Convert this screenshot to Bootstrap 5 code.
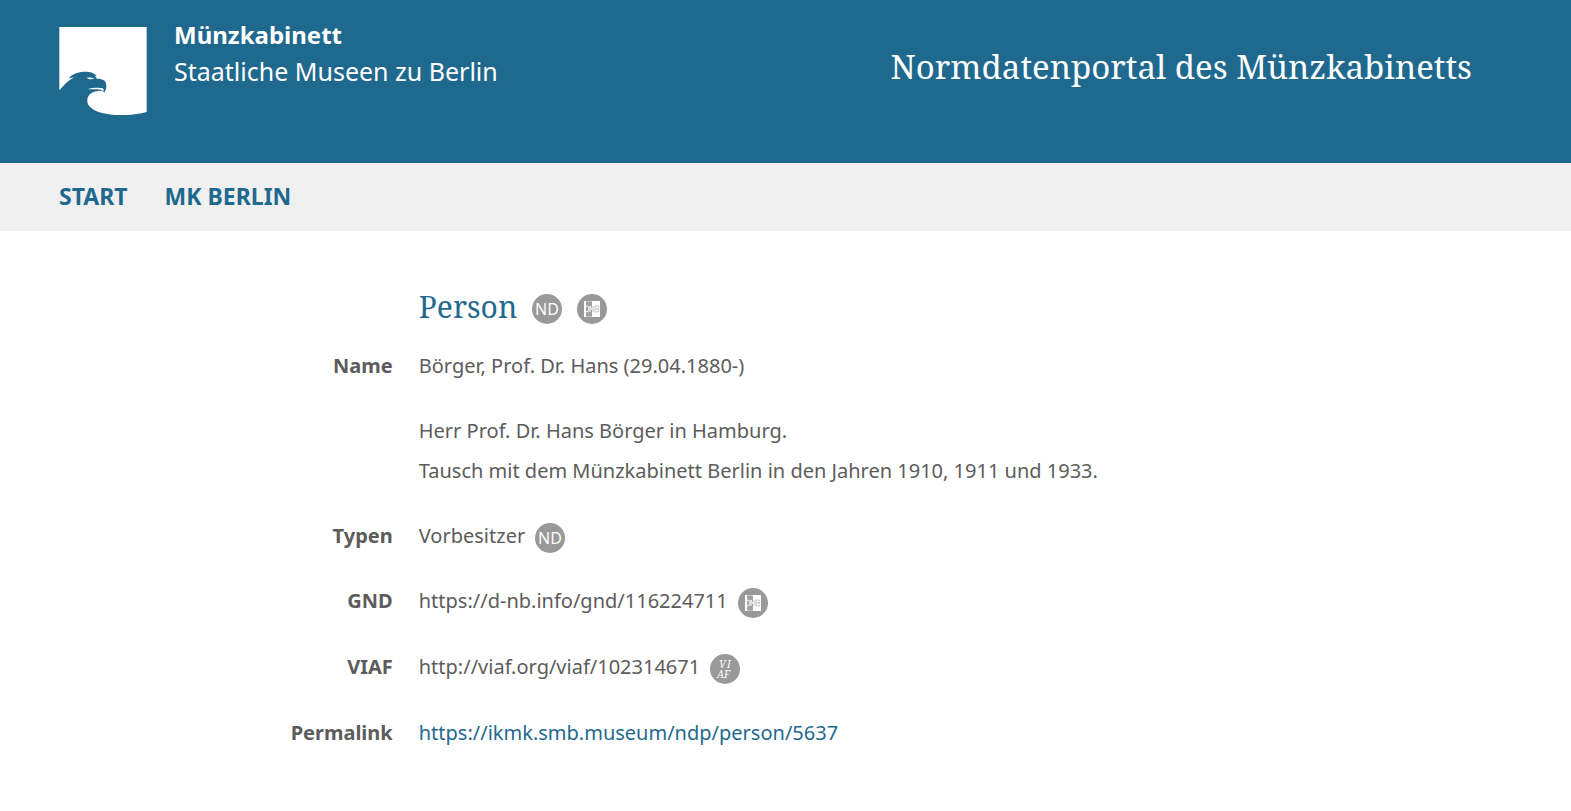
<!DOCTYPE html>
<html lang="de">
<head>
<meta charset="utf-8">
<meta name="viewport" content="width=device-width, initial-scale=1">
<title>Normdatenportal des Münzkabinetts</title>
<link href="https://cdn.jsdelivr.net/npm/bootstrap@5.3.0/dist/css/bootstrap.min.css" rel="stylesheet">
<style>
:root { --mk-blue: #1f698f; }
body { font-family: "Noto Sans", sans-serif; font-size: 20px; line-height: 40px; color: #5c5c5c; }
a { text-decoration: none; }
.site-head { background: var(--mk-blue); min-height: 163px; padding: 27px 99px 48px 59px; }
.site-logo { width: 88px; height: 88px; }
.site-name { font-size: 25px; line-height: 36px; margin: -10px 0 0 27px; }
.site-name .fw-bold { font-size: 24px; }
.site-title { font-family: "Noto Serif", "Liberation Serif", serif; font-size: 33px; line-height: 40px; padding-top: 20px; }
.site-nav { background: #f0f0f0; padding: 13px 59px 15px; gap: 37px; }
.site-nav a { color: var(--mk-blue); font-size: 23px; font-weight: 700; }
.record { padding: 56px 0 40px; }
.record h1 { font-family: "Noto Serif", "Liberation Serif", serif; font-size: 30px; font-weight: 400; line-height: 40px; color: var(--mk-blue); }
.record dt { padding-left: 12px; }
.record dd, .record-head { padding-left: 26px; }
.record a { color: var(--mk-blue); }
.record-row { margin-bottom: 25px; }
.link-row { margin-bottom: 26px; }
.record-head { margin-bottom: 19px; gap: 15px; }
.norm-icon { width: 30px; height: 30px; }
.norm-link { padding-top: 4px; }
dd .norm-link { margin-left: 10px; }
</style>
</head>
<body>
<svg class="d-none" aria-hidden="true">
  <symbol id="icon-nd" viewBox="0 0 30 30"><circle cx="15" cy="15" r="15" fill="#999"/><text x="15" y="21" text-anchor="middle" font-family="Noto Sans, sans-serif" font-size="16" fill="#fff">ND</text></symbol>
  <symbol id="icon-dnb" viewBox="0 0 30 30"><circle cx="15" cy="15" r="15" fill="#999"/><path d="M7 7h2v16H7z" fill="#fff"/><path d="M9 7h6v16H9z" fill="#a2a2a2"/><path d="M15 7h8v16h-8z" fill="#fff"/><path d="M9 7h6v1H9zM9 22h6v1H9z" fill="#c4c4c4"/><path d="M9 12q3 0 3 3t-3 3M13 18v-6l2 4" fill="none" stroke="#fff"/><path d="M16 12v6M18 12v6M18 12h2q2 0 2 1.500t-2 1.500h-2M20 15q2 0 2 1.500t-2 1.500h-2" fill="none" stroke="#c2c2c2"/></symbol>
  <symbol id="icon-viaf" viewBox="0 0 30 30"><circle cx="15" cy="15" r="15" fill="#999"/><g font-family="Noto Serif, serif" font-style="italic" font-size="10" fill="#fff"><text x="9" y="14">V</text><text x="17" y="14">I</text><text x="7" y="24">A</text><text x="14" y="24">F</text></g></symbol>
</svg>

<header class="site-head d-flex justify-content-between align-items-start text-white">
  <div class="d-flex">
    <svg class="site-logo flex-shrink-0" viewBox="27 21 262 264" role="img" aria-label="Münzkabinett Logo">
      <path fill="#fff" d="M27 21H289V276C262 283 234 286 206 285C178 284 153 280 136 272C118 263 110 253 111 240C112 224 124 215 144 213C153 212 158 211 161 218C170 207 170 193 164 184C158 177 148 176 139 176C139 171 135 169 130 168L139 168C133 159 119 155 105 155C88 155 70 160 60 170C57 172 55 175 54 176C59 175 65 172 70 173C54 180 40 196 27 211Z"/>
      <path fill="#fff" d="M110 173C116 171 124 174 132 175C128 179 113 179 110 173ZM115 206C130 202 148 203 157 205C161 207 160 211 160 215C155 208 145 208 115 208Z"/>
    </svg>
    <div class="site-name"><div class="fw-bold">Münzkabinett</div><div>Staatliche Museen zu Berlin</div></div>
  </div>
  <div class="site-title">Normdatenportal des Münzkabinetts</div>
</header>

<nav class="site-nav d-flex align-items-center" aria-label="Hauptnavigation">
  <a href="#start">START</a>
  <a href="#mk-berlin">MK BERLIN</a>
</nav>

<main class="record">
  <div class="row g-0">
    <div class="record-head offset-3 col-9 d-flex align-items-center">
      <h1 class="mb-0">Person</h1>
      <a class="norm-link d-flex" href="#nd" aria-label="Normdaten"><svg class="norm-icon"><use href="#icon-nd"/></svg></a>
      <a class="norm-link d-flex" href="#dnb" aria-label="DNB"><svg class="norm-icon"><use href="#icon-dnb"/></svg></a>
    </div>
  </div>
  <dl class="mb-0">
    <div class="row g-0">
      <dt class="col-3 text-end">Name</dt>
      <dd class="col-9 mb-0">
        <div class="record-row">Börger, Prof. Dr. Hans (29.04.1880-)</div>
        <div class="record-row">Herr Prof. Dr. Hans Börger in Hamburg.<br>Tausch mit dem Münzkabinett Berlin in den Jahren 1910, 1911 und 1933.</div>
      </dd>
    </div>
    <div class="row g-0 record-row">
      <dt class="col-3 text-end">Typen</dt>
      <dd class="col-9 mb-0 d-flex align-items-center"><span>Vorbesitzer</span><a class="norm-link d-flex" href="#nd" aria-label="Normdaten"><svg class="norm-icon"><use href="#icon-nd"/></svg></a></dd>
    </div>
    <div class="row g-0 link-row">
      <dt class="col-3 text-end">GND</dt>
      <dd class="col-9 mb-0 d-flex align-items-center"><span>https://d-nb.info/gnd/116224711</span><a class="norm-link d-flex" href="#gnd" aria-label="GND"><svg class="norm-icon"><use href="#icon-dnb"/></svg></a></dd>
    </div>
    <div class="row g-0 link-row">
      <dt class="col-3 text-end">VIAF</dt>
      <dd class="col-9 mb-0 d-flex align-items-center"><span>http://viaf.org/viaf/102314671</span><a class="norm-link d-flex" href="#viaf" aria-label="VIAF"><svg class="norm-icon"><use href="#icon-viaf"/></svg></a></dd>
    </div>
    <div class="row g-0">
      <dt class="col-3 text-end">Permalink</dt>
      <dd class="col-9 mb-0"><a href="#permalink">https://ikmk.smb.museum/ndp/person/5637</a></dd>
    </div>
  </dl>
</main>
<script src="https://cdn.jsdelivr.net/npm/bootstrap@5.3.0/dist/js/bootstrap.bundle.min.js"></script>
</body>
</html>
